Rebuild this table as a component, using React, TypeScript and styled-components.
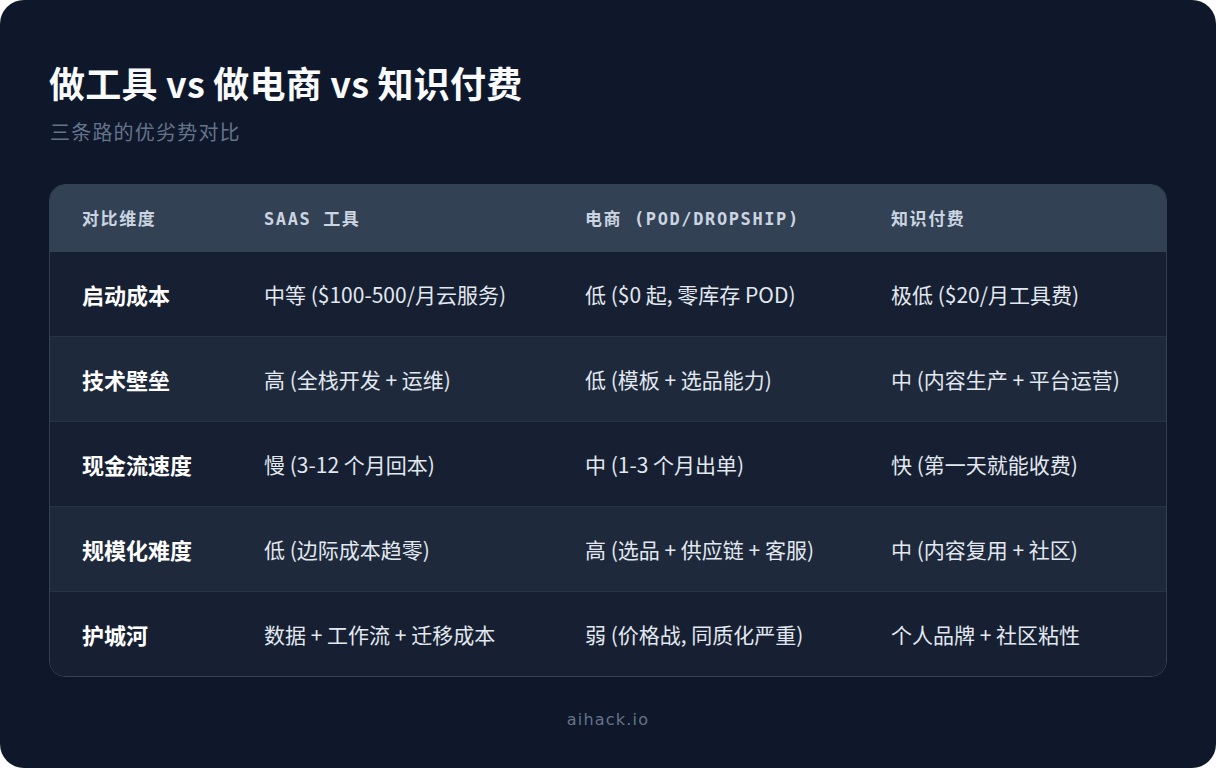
import React from 'react'
import styled, { createGlobalStyle } from 'styled-components'

const GlobalStyle = createGlobalStyle`
  html, body {
    margin: 0;
    padding: 0;
    background: #ffffff;
  }
  body {
    font-family: "Noto Sans CJK SC", "Noto Sans", sans-serif;
  }
`

const rows = [
  ['启动成本', '中等 ($100-500/月云服务)', '低 ($0 起, 零库存 POD)', '极低 ($20/月工具费)'],
  ['技术壁垒', '高 (全栈开发 + 运维)', '低 (模板 + 选品能力)', '中 (内容生产 + 平台运营)'],
  ['现金流速度', '慢 (3-12 个月回本)', '中 (1-3 个月出单)', '快 (第一天就能收费)'],
  ['规模化难度', '低 (边际成本趋零)', '高 (选品 + 供应链 + 客服)', '中 (内容复用 + 社区)'],
  ['护城河', '数据 + 工作流 + 迁移成本', '弱 (价格战, 同质化严重)', '个人品牌 + 社区粘性'],
]

const heads = ['对比维度', 'SaaS 工具', '电商 (POD/Dropship)', '知识付费']

export const App = () => {
  return (
    <>
      <GlobalStyle />
      <Frame>
        <Title>做工具 vs 做电商 vs 知识付费</Title>
        <Subtitle>三条路的优劣势对比</Subtitle>
        <Table>
          <HeadRow>
            {heads.map((h) => (
              <HeadCell key={h}>{h}</HeadCell>
            ))}
          </HeadRow>
          {rows.map((r, i) => (
            <Row key={r[0]} $alt={i % 2 === 1} $last={i === rows.length - 1}>
              <RowLabel>{r[0]}</RowLabel>
              <Cell>{r[1]}</Cell>
              <Cell>{r[2]}</Cell>
              <Cell>{r[3]}</Cell>
            </Row>
          ))}
        </Table>
        <Footer>aihack.io</Footer>
      </Frame>
    </>
  )
}

export default App

const Frame = styled.div`
  box-sizing: border-box;
  width: 1216px;
  height: 768px;
  border-radius: 24px;
  background: #0f172a;
  padding: 58px 49px 0 49px;
  display: flex;
  flex-direction: column;
  overflow: hidden;
`

const Title = styled.h1`
  margin: 0;
  font-size: 36px;
  line-height: 48px;
  font-weight: 700;
  color: #f8fafc;
  letter-spacing: 0.2px;
`

const Subtitle = styled.p`
  margin: 12px 0 0 1px;
  font-size: 20px;
  line-height: 28px;
  color: #64748b;
  letter-spacing: 1.2px;
`

const Table = styled.div`
  margin-top: 38px;
  border: 1px solid #334155;
  border-radius: 16px;
  overflow: hidden;
  display: flex;
  flex-direction: column;
`

const cols = `182px 321px 306px 1fr`

const HeadRow = styled.div`
  display: grid;
  grid-template-columns: ${cols};
  background: #334155;
`

const HeadCell = styled.div`
  padding: 24px 32px 23px 32px;
  font-family: "DejaVu Sans Mono", "Noto Sans CJK SC", monospace;
  font-size: 17px;
  line-height: 20px;
  font-weight: 700;
  letter-spacing: 1.6px;
  text-transform: uppercase;
  color: #cbd5e1;
  white-space: nowrap;
`

const Row = styled.div<{ $alt: boolean; $last: boolean }>`
  display: grid;
  grid-template-columns: ${cols};
  align-items: center;
  background: ${(p) => (p.$alt ? '#1e293b' : '#172032')};
  border-bottom: ${(p) => (p.$last ? 'none' : '1px solid #273244')};
`

const Cell = styled.div`
  padding: 28px 32px;
  font-size: 21px;
  line-height: 28px;
  color: #e2e8f0;
  white-space: nowrap;
`

const RowLabel = styled(Cell)`
  font-size: 22px;
  font-weight: 700;
  color: #ffffff;
`

const Footer = styled.div`
  margin-top: 31px;
  text-align: center;
  font-family: "DejaVu Sans", "Noto Sans", sans-serif;
  font-size: 16px;
  line-height: 24px;
  letter-spacing: 1.2px;
  color: #64748b;
`
